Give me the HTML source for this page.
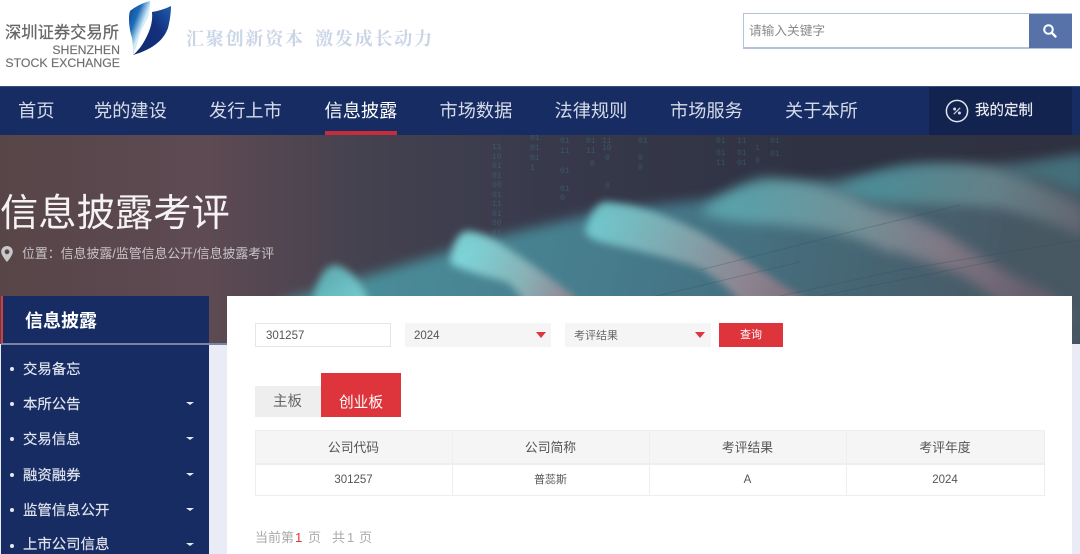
<!DOCTYPE html>
<html lang="zh-CN"><head><meta charset="utf-8"><title>信息披露考评</title>
<style>
*{box-sizing:border-box;margin:0;padding:0}
html,body{width:1080px;height:554px;overflow:hidden;background:#e9ecf5;font-family:"Liberation Sans","Noto Sans CJK SC",sans-serif}
.a{position:absolute;white-space:nowrap}
#top{left:0;top:0;width:1080px;height:86px;background:#fff}
#nav{left:0;top:86px;width:1080px;height:49px;background:#172c63;border-top:1px solid #3a4e80}
.n{position:absolute;top:87px;height:48px;line-height:49px;font-size:18.2px;color:#d6dbe8}
.side{color:#e3e6ef;font-size:14.4px;line-height:18px;height:18px;left:23px;-webkit-text-stroke:.15px #e3e6ef;overflow:visible}
.dot{position:absolute;left:10px;width:4px;height:4px;border-radius:50%;background:#e6e9f1}
.car{position:absolute;left:186px;width:0;height:0;border-left:4px solid transparent;border-right:4px solid transparent;border-top:3px solid #e6e9f1}
.tri{position:absolute;top:332px;width:0;height:0;border-left:5px solid transparent;border-right:5px solid transparent;border-top:6px solid #de343b}
.c{text-align:center;color:#555}
</style></head><body>
<div class="a" id="top"></div>
<svg class="a" style="left:125px;top:0" width="50" height="60" viewBox="125 0 50 60">
<defs>
<linearGradient id="l" x1="0" y1="0" x2="1" y2="1"><stop offset="0" stop-color="#123f8e"/><stop offset=".32" stop-color="#1e6cb8"/><stop offset=".55" stop-color="#d8f1fb"/><stop offset=".75" stop-color="#6fc6ea"/><stop offset="1" stop-color="#1b8fd0"/></linearGradient>
<linearGradient id="r" x1="1" y1="0" x2="0" y2="1"><stop offset="0" stop-color="#1d5fae"/><stop offset=".4" stop-color="#14307d"/><stop offset="1" stop-color="#102a70"/></linearGradient>
</defs>
<path fill="url(#l)" d="M150 1C142 3 135 7 130 11C128 17 129 28 132 38C133 44 133 50 133 55C137 46 139 35 143 27C148 18 151 10 150 1Z"/>
<path fill="url(#r)" d="M171 6C165 9 158 11 152 12C153 22 150 30 146 38C142 46 137 52 133 55C150 50 163 42 168 28C170 20 171 12 171 6Z"/>
</svg>
<div class="a" style="left:5px;top:23px;font-size:16.3px;line-height:20px;color:#666;-webkit-text-stroke:.25px #666">深圳证券交易所</div>
<div class="a" style="left:0;top:44px;width:120px;text-align:right;font-size:12.3px;line-height:12.5px;color:#6e6e6e;-webkit-text-stroke:.15px #6e6e6e">SHENZHEN<br>STOCK EXCHANGE</div>
<div class="a" style="left:186px;top:25px;font-family:'Noto Serif CJK SC','Liberation Serif',serif;font-size:18px;line-height:26px;letter-spacing:1.8px;color:#c9d4e6;font-weight:700;word-spacing:4px">汇聚创新资本 激发成长动力</div>
<div class="a" style="left:743px;top:13px;width:329px;height:36px;border:1px solid #b5c2dc;border-width:1px 1px 2px 1px;background:#fff"></div>
<div class="a" style="left:749px;top:21px;font-size:12.7px;line-height:20px;color:#8a8a8a">请输入关键字</div>
<div class="a" style="left:1029px;top:14px;width:43px;height:34px;background:#5672a8"></div>
<svg class="a" style="left:1042px;top:23px" width="16" height="16" viewBox="0 0 16 16"><circle cx="6.5" cy="6.5" r="4.3" fill="none" stroke="#fff" stroke-width="2"/><path d="M9.8 9.8L13.5 13.5" stroke="#fff" stroke-width="2.4" stroke-linecap="round"/></svg>

<div class="a" id="nav"></div>
<div class="n" style="left:18px">首页</div>
<div class="n" style="left:94px">党的建设</div>
<div class="n" style="left:209px">发行上市</div>
<div class="n" style="left:324.5px;color:#fff">信息披露</div>
<div class="a" style="left:325px;top:131px;width:72px;height:4px;background:#c72c3b"></div>
<div class="n" style="left:439.5px">市场数据</div>
<div class="n" style="left:554.5px">法律规则</div>
<div class="n" style="left:670px">市场服务</div>
<div class="n" style="left:785px">关于本所</div>
<div class="a" style="left:929px;top:87px;width:143px;height:48px;background:#12234f"></div>
<svg class="a" style="left:945px;top:99px" width="24" height="24" viewBox="0 0 24 24"><circle cx="12" cy="12" r="10.6" fill="none" stroke="#e4e6ec" stroke-width="1.5"/><path d="M8.8 15.2L15.2 8.8" stroke="#c9ccd6" stroke-width="1.3"/><circle cx="9.6" cy="10" r="1.5" fill="#d8dbe3"/><circle cx="14.4" cy="14" r="1.5" fill="#d8dbe3"/></svg>
<div class="a" style="left:975px;top:101px;font-size:14.5px;line-height:21px;color:#eceef3;-webkit-text-stroke:.15px #eceef3">我的定制</div>

<svg class="a" style="left:0;top:135px" width="1080" height="209" viewBox="0 135 1080 209">
<defs>
<linearGradient id="bg" x1="0" y1="0" x2="1" y2="0"><stop offset="0" stop-color="#574548"/><stop offset=".19" stop-color="#5e4a53"/><stop offset=".33" stop-color="#45424f"/><stop offset=".5" stop-color="#383a4c"/><stop offset=".75" stop-color="#2f3242"/><stop offset="1" stop-color="#2f3140"/></linearGradient>
<linearGradient id="fl" gradientUnits="userSpaceOnUse" x1="350" y1="200" x2="1000" y2="320"><stop offset="0" stop-color="#4b8f9a"/><stop offset=".45" stop-color="#45798a"/><stop offset="1" stop-color="#465864"/></linearGradient>
<linearGradient id="g0" gradientUnits="userSpaceOnUse" x1="330" y1="270" x2="375" y2="296"><stop offset="0" stop-color="#64bcc0"/><stop offset="1" stop-color="#7ed2d5"/></linearGradient>
<linearGradient id="g1" gradientUnits="userSpaceOnUse" x1="465" y1="260" x2="570" y2="300"><stop offset="0" stop-color="#82dbdd"/><stop offset=".55" stop-color="#8fb7ba"/><stop offset="1" stop-color="#9a8795"/></linearGradient>
<linearGradient id="gA" gradientUnits="userSpaceOnUse" x1="600" y1="225" x2="780" y2="300"><stop offset="0" stop-color="#78d2d5"/><stop offset=".42" stop-color="#8badb2"/><stop offset=".8" stop-color="#9b8894"/><stop offset="1" stop-color="#8c7886"/></linearGradient>
<linearGradient id="gB" gradientUnits="userSpaceOnUse" x1="740" y1="205" x2="1030" y2="290"><stop offset="0" stop-color="#5ea9b0"/><stop offset=".4" stop-color="#7c979d"/><stop offset=".7" stop-color="#8a7b88"/><stop offset="1" stop-color="#6e6170"/></linearGradient>
<linearGradient id="gC" gradientUnits="userSpaceOnUse" x1="880" y1="185" x2="1080" y2="225"><stop offset="0" stop-color="#4f959e"/><stop offset=".55" stop-color="#6c8a90"/><stop offset="1" stop-color="#696a76"/></linearGradient>
<filter id="b2" x="-20%" y="-20%" width="140%" height="140%"><feGaussianBlur stdDeviation="4"/></filter>
<filter id="b4" x="-20%" y="-20%" width="140%" height="140%"><feGaussianBlur stdDeviation="6"/></filter>
<filter id="b5" x="-10%" y="-10%" width="120%" height="120%"><feGaussianBlur stdDeviation="6"/></filter>
</defs>
<rect x="0" y="135" width="1080" height="209" fill="url(#bg)"/>
<g font-family="'Liberation Mono',monospace" font-size="8" fill="#3f9aa0" opacity=".3">
<text x="492" y="149">11</text><text x="492" y="159">10</text><text x="492" y="168">01</text><text x="492" y="178">01</text><text x="492" y="187">00</text><text x="492" y="197">01</text><text x="492" y="206">11</text><text x="492" y="216">01</text><text x="492" y="225">00</text><text x="492" y="235">01</text>
<text x="530" y="140">01</text><text x="530" y="150">01</text><text x="530" y="160">01</text><text x="530" y="170">1</text>
<text x="560" y="143">01</text><text x="560" y="153">11</text><text x="560" y="173">01</text><text x="560" y="191">01</text><text x="560" y="200">0</text>
<text x="586" y="143">01</text><text x="586" y="153">11</text><text x="590" y="166">0</text>
<text x="602" y="143">11</text><text x="602" y="150">10</text><text x="605" y="160">0</text><text x="605" y="188">0</text>
<text x="638" y="143">01</text><text x="638" y="160">0</text><text x="638" y="170">0</text>
<text x="716" y="143">01</text><text x="716" y="155">01</text><text x="716" y="165">11</text>
<text x="737" y="143">11</text><text x="737" y="155">01</text><text x="737" y="165">01</text>
<text x="755" y="150">1</text><text x="755" y="163">0</text>
<text x="770" y="143">01</text><text x="770" y="156">01</text>
</g>
<path fill="url(#fl)" filter="url(#b5)" d="M280 302L500 236L600 212L700 200L800 183L900 171L1033 161L1090 154V350H280Z"/>
<path fill="url(#gC)" filter="url(#b4)" opacity=".8" d="M833 190C870 172 900 163 933 163C965 163 995 168 1017 175C1040 184 1060 195 1085 206V238C1070 230 1050 222 1000 208C960 204 920 204 887 203C865 200 850 196 833 190Z"/>
<path fill="#3f8b97" filter="url(#b4)" opacity=".45" d="M1000 170L1085 153V193L1040 178Z"/>
<path fill="url(#gB)" filter="url(#b4)" opacity=".85" d="M700 212C720 195 745 180 767 178C800 178 840 190 867 205C885 212 900 214 913 218C930 226 942 232 953 238C970 250 985 258 1000 268C1020 280 1040 288 1053 295L1075 320H1015L990 295L967 278C945 268 920 260 897 252L887 252C870 242 850 236 833 232C800 226 770 224 737 222C722 220 710 216 700 212Z"/>
<path fill="url(#gA)" filter="url(#b2)" opacity=".85" d="M585 232C590 212 598 202 606 202C640 204 672 218 700 232C730 250 770 276 800 296L830 320H760L735 296C725 285 712 276 700 268C670 258 635 250 600 242C594 240 588 237 585 232Z"/>
<path fill="url(#g1)" filter="url(#b2)" opacity=".9" d="M450 262C452 245 458 232 467 231C482 232 496 240 507 248C530 262 555 282 573 295L585 320H530L520 295C515 290 512 286 507 282C492 278 475 274 460 268C455 267 452 265 450 262Z"/>
<path fill="url(#g0)" filter="url(#b2)" opacity=".9" d="M313 300C316 282 324 266 335 265C350 268 360 282 367 296L372 320H312Z"/>
<g stroke="#2c4757" stroke-width="1" opacity=".25" fill="none"><path d="M780 296L900 270L1080 240"/><path d="M700 270L850 232L960 205"/><path d="M640 300L800 262"/><path d="M820 296L1000 260"/></g>
</svg>
<div class="a" style="left:0;top:187px;font-size:38.3px;line-height:54px;color:#f4f2f3">信息披露考评</div>
<svg class="a" style="left:1px;top:246px" width="12" height="16" viewBox="0 0 12 16"><path fill="#c9c7c9" fill-rule="evenodd" d="M6 0C2.7 0 .2 2.5.2 5.7C.2 9.6 6 16 6 16S11.8 9.6 11.8 5.7C11.8 2.5 9.3 0 6 0ZM6 3.4A2.4 2.4 0 1 1 6 8.2A2.4 2.4 0 1 1 6 3.4Z"/></svg>
<div class="a" style="left:22px;top:244px;font-size:12.9px;line-height:20px;color:#c8c4c7">位置：信息披露/监管信息公开/信息披露考评</div>

<div class="a" style="left:1px;top:296px;width:208px;height:258px;background:#172c63"></div>
<div class="a" style="left:1px;top:296px;width:2px;height:48px;background:#d93a42"></div>
<div class="a" style="left:1px;top:343px;width:226px;height:2px;background:#7684a6"></div>
<div class="a" style="left:25px;top:309px;font-size:18px;line-height:24px;font-weight:700;color:#fff">信息披露</div>
<div class="a side" style="top:361px">交易备忘</div><i class="dot" style="top:367px"></i>
<div class="a side" style="top:396px">本所公告</div><i class="dot" style="top:402px"></i><i class="car" style="top:402px"></i>
<div class="a side" style="top:431px">交易信息</div><i class="dot" style="top:437px"></i><i class="car" style="top:437px"></i>
<div class="a side" style="top:467px">融资融券</div><i class="dot" style="top:473px"></i><i class="car" style="top:473px"></i>
<div class="a side" style="top:502px">监管信息公开</div><i class="dot" style="top:508px"></i><i class="car" style="top:508px"></i>
<div class="a side" style="top:536px;line-height:18px">上市公司信息</div><i class="dot" style="top:544px"></i><i class="car" style="top:543px"></i>

<div class="a" style="left:227px;top:296px;width:845px;height:258px;background:#fff"></div>
<div class="a" style="left:255px;top:323px;width:136px;height:24px;border:1px solid #e6e6e6;background:#fff"></div>
<div class="a" style="left:266px;top:326px;font-size:11.5px;line-height:20px;color:#555">301257</div>
<div class="a" style="left:405px;top:323px;width:146px;height:24px;background:#f5f5f5"></div>
<div class="a" style="left:414px;top:326px;font-size:11.5px;line-height:20px;color:#555">2024</div>
<i class="tri" style="left:536px"></i>
<div class="a" style="left:565px;top:323px;width:146px;height:24px;background:#f5f5f5"></div>
<div class="a" style="left:574px;top:326px;font-size:11px;line-height:20px;color:#666">考评结果</div>
<i class="tri" style="left:695px"></i>
<div class="a" style="left:719px;top:323px;width:64px;height:24px;background:#de343b;color:#fff;font-size:11px;line-height:25px;text-align:center">查询</div>

<div class="a" style="left:255px;top:386px;width:66px;height:31px;background:#eeeeee;color:#666;font-size:14.5px;line-height:33px;text-align:center;text-indent:-1px">主板</div>
<div class="a" style="left:321px;top:373px;width:80px;height:44px;background:#de343b;color:#fff;font-size:14.7px;line-height:60px;text-align:center">创业板</div>

<div class="a" style="left:255px;top:430px;width:790px;height:66px;border:1px solid #eeeeee;background:#fff"></div>
<div class="a" style="left:255px;top:430px;width:790px;height:35px;background:#f5f5f5;border:1px solid #eeeeee;border-bottom-width:2px"></div>
<div class="a" style="left:452px;top:430px;width:1px;height:65px;background:#eeeeee"></div>
<div class="a" style="left:649px;top:430px;width:1px;height:65px;background:#eeeeee"></div>
<div class="a" style="left:846px;top:430px;width:1px;height:65px;background:#eeeeee"></div>
<div class="a c" style="left:255px;top:438px;width:197px;font-size:12.8px;line-height:20px">公司代码</div>
<div class="a c" style="left:452px;top:438px;width:197px;font-size:12.8px;line-height:20px">公司简称</div>
<div class="a c" style="left:649px;top:438px;width:197px;font-size:12.8px;line-height:20px">考评结果</div>
<div class="a c" style="left:846px;top:438px;width:198px;font-size:12.8px;line-height:20px">考评年度</div>
<div class="a c" style="left:255px;top:470px;width:197px;font-size:11.5px;line-height:20px">301257</div>
<div class="a c" style="left:452px;top:470px;width:197px;font-size:11px;line-height:20px">普蕊斯</div>
<div class="a c" style="left:649px;top:470px;width:197px;font-size:11.5px;line-height:20px">A</div>
<div class="a c" style="left:846px;top:470px;width:198px;font-size:11.5px;line-height:20px">2024</div>

<div class="a" style="left:255px;top:528px;font-size:13px;line-height:20px;color:#aaa">当前第</div>
<div class="a" style="left:295px;top:528px;font-size:13px;line-height:20px;color:#de343b">1</div>
<div class="a" style="left:308px;top:528px;font-size:13px;line-height:20px;color:#aaa">页</div>
<div class="a" style="left:332px;top:528px;font-size:13px;line-height:20px;color:#aaa">共</div>
<div class="a" style="left:347px;top:528px;font-size:13px;line-height:20px;color:#aaa">1</div>
<div class="a" style="left:359px;top:528px;font-size:13px;line-height:20px;color:#aaa">页</div>
</body></html>
